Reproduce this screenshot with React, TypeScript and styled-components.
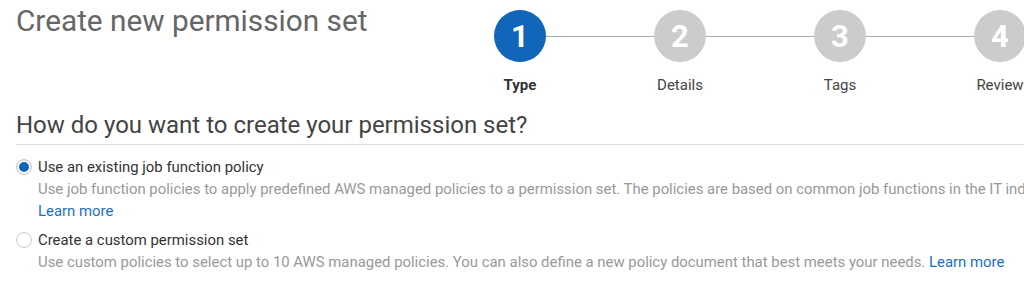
import React from 'react';
import styled, { createGlobalStyle } from 'styled-components';

const GlobalStyle = createGlobalStyle`
  html, body {
    margin: 0;
    padding: 0;
    background: #ffffff;
    overflow: hidden;
  }
  body {
    font-family: Roboto, "Noto Sans", Arial, sans-serif;
    color: #333333;
  }
`;

const Page = styled.div`
  width: 1024px;
  height: 302px;
  overflow: hidden;
`;

const Header = styled.div`
  display: grid;
  grid-template-columns: 494px 1fr;
  height: 110px;
`;

const Title = styled.h1`
  margin: 0;
  padding: 3px 0 0 16px;
  font-size: 29.75px;
  font-weight: 400;
  line-height: 36px;
  color: #666666;
  white-space: nowrap;
`;

const Stepper = styled.div`
  display: flex;
  align-items: flex-start;
  padding-top: 10px;
`;

const Step = styled.div`
  display: flex;
  flex-direction: column;
  align-items: center;
  width: 52px;
  flex-shrink: 0;
`;

const Circle = styled.div<{ $active?: boolean }>`
  width: 52px;
  height: 52px;
  border-radius: 50%;
  background: ${p => (p.$active ? '#1166bb' : '#cccccc')};
  color: #ffffff;
  display: flex;
  align-items: center;
  justify-content: center;
  font-size: 31px;
  font-weight: 700;
`;

const StepLabel = styled.div<{ $active?: boolean }>`
  margin-top: 15px;
  font-size: 15px;
  line-height: 16px;
  white-space: nowrap;
  color: ${p => (p.$active ? '#333333' : '#444444')};
  font-weight: ${p => (p.$active ? 700 : 400)};
`;

const Connector = styled.div`
  width: 108px;
  height: 1px;
  margin-top: 26px;
  background: #aaaaaa;
  flex-shrink: 0;
`;

const Section = styled.div`
  padding-left: 16px;
`;

const SectionTitle = styled.h2`
  margin: 0;
  padding: 1px 0 5px;
  font-size: 24px;
  font-weight: 400;
  line-height: 28px;
  color: #444444;
  border-bottom: 1px solid #dddddd;
`;

const Options = styled.div`
  display: flex;
  flex-direction: column;
  gap: 7px;
  padding-top: 11px;
`;

const Option = styled.label`
  display: grid;
  grid-template-columns: 22px 1fr;
  cursor: pointer;
`;

const Radio = styled.span<{ $checked?: boolean }>`
  width: 14px;
  height: 14px;
  margin-top: 3px;
  border-radius: 50%;
  border: 1px solid #cccccc;
  background: #ffffff;
  box-shadow: ${p => (p.$checked ? 'inset 0 0 0 2px #ffffff, inset 0 0 0 8px #1166bb' : 'none')};
`;

const OptionBody = styled.div`
  display: flex;
  flex-direction: column;
`;

const OptionLabel = styled.span`
  font-size: 14.9px;
  line-height: 22px;
  color: #333333;
`;

const Description = styled.span`
  font-size: 14.9px;
  line-height: 22px;
  color: #999999;
  white-space: nowrap;
`;

const Link = styled.a`
  font-size: 14.9px;
  line-height: 22px;
  color: #1a6fc4;
  text-decoration: none;
`;

const steps = ['Type', 'Details', 'Tags', 'Review'];

export default function App() {
  return (
    <Page>
      <GlobalStyle />
      <Header>
        <Title>Create new permission set</Title>
        <Stepper>
          {steps.map((label, i) => (
            <React.Fragment key={label}>
              {i > 0 && <Connector />}
              <Step>
                <Circle $active={i === 0}>{i + 1}</Circle>
                <StepLabel $active={i === 0}>{label}</StepLabel>
              </Step>
            </React.Fragment>
          ))}
        </Stepper>
      </Header>
      <Section>
        <SectionTitle>How do you want to create your permission set?</SectionTitle>
        <Options>
          <Option>
            <Radio $checked />
            <OptionBody>
              <OptionLabel>Use an existing job function policy</OptionLabel>
              <Description>
                Use job function policies to apply predefined AWS managed policies to a permission set. The policies are based on common job functions in the IT industry.
              </Description>
              <Link href="#">Learn more</Link>
            </OptionBody>
          </Option>
          <Option>
            <Radio />
            <OptionBody>
              <OptionLabel>Create a custom permission set</OptionLabel>
              <Description>
                Use custom policies to select up to 10 AWS managed policies. You can also define a new policy document that best meets your needs.{' '}
                <Link href="#">Learn more</Link>
              </Description>
            </OptionBody>
          </Option>
        </Options>
      </Section>
    </Page>
  );
}
